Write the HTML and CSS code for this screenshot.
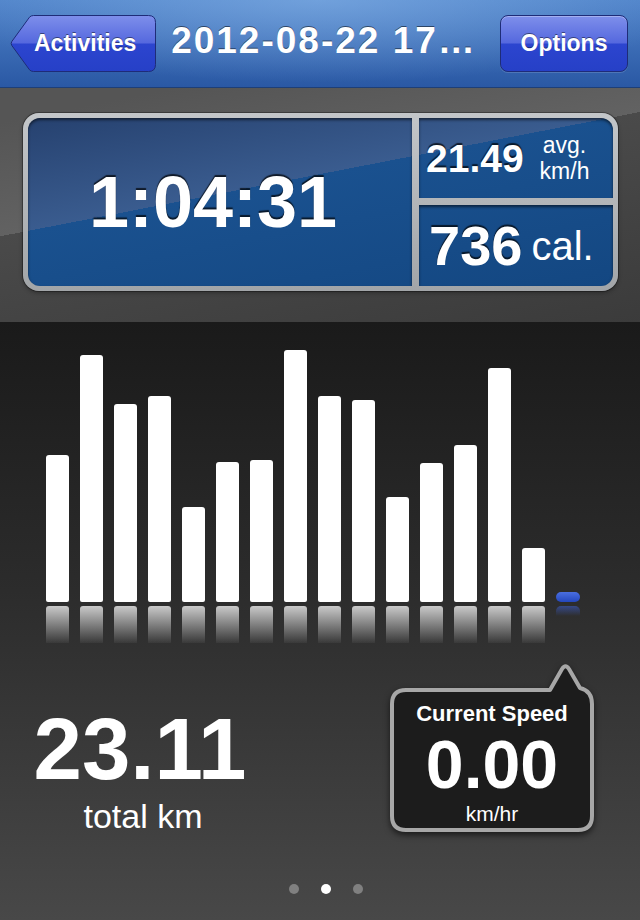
FILE: index.html
```html
<!-- index.html -->
<!DOCTYPE html>
<html lang="en">
<head>
  <meta charset="UTF-8" />
  <title>Activity</title>
  <meta name="viewport" content="width=device-width, initial-scale=1.0" />
  <link rel="stylesheet" href="styles.css">
</head>
<body>
  <header class="navbar">
    <a class="back" href="#">
      <svg width="146" height="57" viewBox="0 0 146 57">
        <defs>
          <linearGradient id="btn" x1="0" y1="0" x2="0" y2="1">
            <stop offset="0" stop-color="#7e8feb"/>
            <stop offset=".49" stop-color="#5568de"/>
            <stop offset=".51" stop-color="#2c45cf"/>
            <stop offset="1" stop-color="#2640c7"/>
          </linearGradient>
        </defs>
        <path d="M23.5 .5 H138.5 Q145.5 .5 145.5 7.5 V49.5 Q145.5 56.5 138.5 56.5 H23.5 Q21 56.5 19.5 54.8 L1.8 30.5 Q.5 28.5 1.8 26.5 L19.5 2.2 Q21 .5 23.5 .5 Z" fill="url(#btn)" stroke="#1e2c78"/>
      </svg>
      <span>Activities</span>
    </a>
    <div class="title">2012-08-22 17…</div>
    <a class="options" href="#">Options</a>
  </header>

  <section class="summary">
    <div class="panel">
      <div class="cell time">1:04:31</div>
      <div class="cell speed">
        <span class="num">21.49</span>
        <span class="unit">avg.<br>km/h</span>
      </div>
      <div class="cell cal">
        <span class="num">736</span>
        <span class="unit">cal.</span>
      </div>
    </div>
  </section>

  <section class="chart">
    <div class="bars">
      <div class="bar" style="height:147px"></div>
      <div class="bar" style="height:247px"></div>
      <div class="bar" style="height:198px"></div>
      <div class="bar" style="height:206px"></div>
      <div class="bar" style="height:95px"></div>
      <div class="bar" style="height:140px"></div>
      <div class="bar" style="height:142px"></div>
      <div class="bar" style="height:252px"></div>
      <div class="bar" style="height:206px"></div>
      <div class="bar" style="height:202px"></div>
      <div class="bar" style="height:105px"></div>
      <div class="bar" style="height:139px"></div>
      <div class="bar" style="height:157px"></div>
      <div class="bar" style="height:234px"></div>
      <div class="bar" style="height:54px"></div>
      <div class="bar now"></div>
    </div>
    <div class="reflect">
      <div></div><div></div><div></div><div></div><div></div>
      <div></div><div></div><div></div><div></div><div></div>
      <div></div><div></div><div></div><div></div><div></div>
      <div class="now"></div>
    </div>

    <div class="stats">
      <div class="total">
        <div class="value">23.11</div>
        <div class="label">total km</div>
      </div>
      <div class="bubble">
        <svg width="204" height="168" viewBox="0 0 204 168">
          <path d="M16 26 H160 L172 5 Q175.5 -0.5 179 5 L190 24 Q202 27 202 40 V152 Q202 166 188 166 H16 Q2 166 2 152 V40 Q2 26 16 26 Z" fill="#1c1c1c" stroke="#a7a7a7" stroke-width="4" stroke-linejoin="round"/>
        </svg>
        <div class="caption">Current Speed</div>
        <div class="value">0.00</div>
        <div class="unit">km/hr</div>
      </div>
    </div>

    <div class="dots">
      <span class="dot"></span>
      <span class="dot on"></span>
      <span class="dot"></span>
    </div>
  </section>
</body>
</html>
```

FILE: styles.css
```css
body {
  margin: 0;
  width: 640px;
  height: 920px;
  overflow: hidden;
  font-family: "Liberation Sans", Arial, sans-serif;
  background: #1b1b1b;
  color: #fff;
}

a {
  color: #fff;
  text-decoration: none;
}

.navbar {
  height: 88px;
  box-sizing: border-box;
  display: flex;
  align-items: center;
  padding: 0 12px 0 10px;
  background:
    radial-gradient(ellipse 60% 95% at 50% 0, rgba(140, 185, 235, 0.55), rgba(140, 185, 235, 0)),
    linear-gradient(#4f83c9, #2a58a4);
  border-bottom: 1px solid #1d3f78;
}

.back {
  position: relative;
  width: 146px;
  height: 57px;
  box-sizing: border-box;
  display: flex;
  align-items: center;
  padding-left: 24px;
  font-size: 23px;
  font-weight: bold;
  text-shadow: 0 -1px 0 rgba(0, 0, 0, 0.45);
}

.back svg {
  position: absolute;
  left: 0;
  top: 0;
}

.back span {
  position: relative;
}

.title {
  flex: 1;
  margin-right: 8px;
  padding-bottom: 7px;
  text-align: center;
  white-space: nowrap;
  font-size: 37px;
  font-weight: bold;
  letter-spacing: 2px;
  line-height: 1;
  text-shadow: 0 -1px 0 rgba(0, 0, 0, 0.5);
}

.options {
  width: 128px;
  height: 57px;
  box-sizing: border-box;
  display: flex;
  align-items: center;
  justify-content: center;
  border: 1px solid #1e2c78;
  border-radius: 8px;
  font-size: 23px;
  font-weight: bold;
  text-shadow: 0 -1px 0 rgba(0, 0, 0, 0.45);
  background: linear-gradient(#7e8feb, #5568de 49%, #2c45cf 51%, #2640c7);
  box-shadow: inset 0 1px 0 rgba(255, 255, 255, 0.3), 0 1px 0 rgba(255, 255, 255, 0.15);
}

.summary {
  height: 234px;
  box-sizing: border-box;
  padding: 25px 22px 0 23px;
  background: linear-gradient(169deg, #555 120px, #626262 232px, #4a4a4a 232px, #3b3b3b 440px) fixed;
}

.panel {
  display: grid;
  grid-template-columns: 384px 1fr;
  grid-template-rows: 80px 81px;
  gap: 7px;
  padding: 5px;
  border-radius: 16px;
  background: linear-gradient(#c3c6c9, #a2a5a8);
  box-shadow: 0 0 0 1px rgba(0, 0, 0, 0.3), 0 2px 4px rgba(0, 0, 0, 0.3);
}

.cell {
  display: flex;
  align-items: center;
  font-weight: bold;
  line-height: 1;
  text-shadow: 0 -2px 1px rgba(0, 0, 0, 0.7);
  background: linear-gradient(169deg, #223c69 100px, #3a5c8f 232px, #1a518f 232px, #12457f 430px) fixed;
  box-shadow: inset 0 2px 3px rgba(0, 0, 0, 0.55);
}

.time {
  grid-row: 1 / 3;
  justify-content: center;
  padding-right: 14px;
  border-radius: 12px 0 0 12px;
  font-size: 72px;
}

.speed {
  padding-left: 7px;
  border-top-right-radius: 12px;
}

.speed .num {
  font-size: 39px;
}

.speed .unit {
  margin-left: 16px;
  font-size: 23px;
  font-weight: normal;
  line-height: 26px;
  text-align: center;
  text-shadow: none;
}

.cal {
  padding-left: 10px;
  border-bottom-right-radius: 12px;
}

.cal .num {
  font-size: 56px;
}

.cal .unit {
  margin-left: 9px;
  font-size: 40px;
  font-weight: normal;
  text-shadow: none;
}

.chart {
  height: 598px;
  box-sizing: border-box;
  padding-top: 28px;
  background: linear-gradient(#1a1a1a, #2c2c2c 45%, #484848);
}

.bars {
  display: flex;
  align-items: flex-end;
  gap: 11px;
  height: 252px;
  padding-left: 46px;
}

.bar {
  width: 23px;
  background: #fff;
  border-radius: 3px 3px 2px 2px;
}

.bar.now {
  width: 24px;
  height: 10px;
  border-radius: 5px;
  background: linear-gradient(#4a6fe0, #2447bd);
}

.reflect {
  display: flex;
  align-items: flex-start;
  gap: 11px;
  height: 37px;
  margin-top: 4px;
  padding-left: 46px;
}

.reflect div {
  width: 23px;
  height: 37px;
  border-radius: 3px 3px 0 0;
  background: linear-gradient(rgba(215, 215, 215, 0.92), rgba(215, 215, 215, 0.05));
}

.reflect .now {
  width: 24px;
  height: 10px;
  border-radius: 5px 5px 0 0;
  background: linear-gradient(rgba(60, 95, 210, 0.55), rgba(60, 95, 210, 0));
}

.stats {
  display: flex;
  justify-content: space-between;
  align-items: flex-start;
  margin-top: 45px;
  padding: 0 46px 0 30px;
}

.total {
  width: 220px;
  margin-top: 17px;
  text-align: center;
  line-height: 1;
}

.total .value {
  font-size: 87px;
  font-weight: bold;
}

.total .label {
  margin-top: 7px;
  padding-left: 6px;
  font-size: 34px;
}

.bubble {
  position: relative;
  width: 204px;
  height: 144px;
  box-sizing: border-box;
  padding-top: 13px;
  text-align: center;
}

.bubble svg {
  position: absolute;
  left: 0;
  top: -24px;
  filter: drop-shadow(0 3px 3px rgba(0, 0, 0, 0.6));
}

.bubble div {
  position: relative;
}

.bubble .caption {
  font-size: 22px;
  font-weight: bold;
  line-height: 25px;
}

.bubble .value {
  font-size: 68px;
  font-weight: bold;
  line-height: 76px;
}

.bubble .unit {
  font-size: 21px;
  line-height: 24px;
}

.dots {
  display: flex;
  justify-content: center;
  gap: 22px;
  margin-top: 51px;
  padding-left: 12px;
}

.dot {
  width: 10px;
  height: 10px;
  border-radius: 50%;
  background: #808080;
}

.dot.on {
  background: #fff;
}
```
